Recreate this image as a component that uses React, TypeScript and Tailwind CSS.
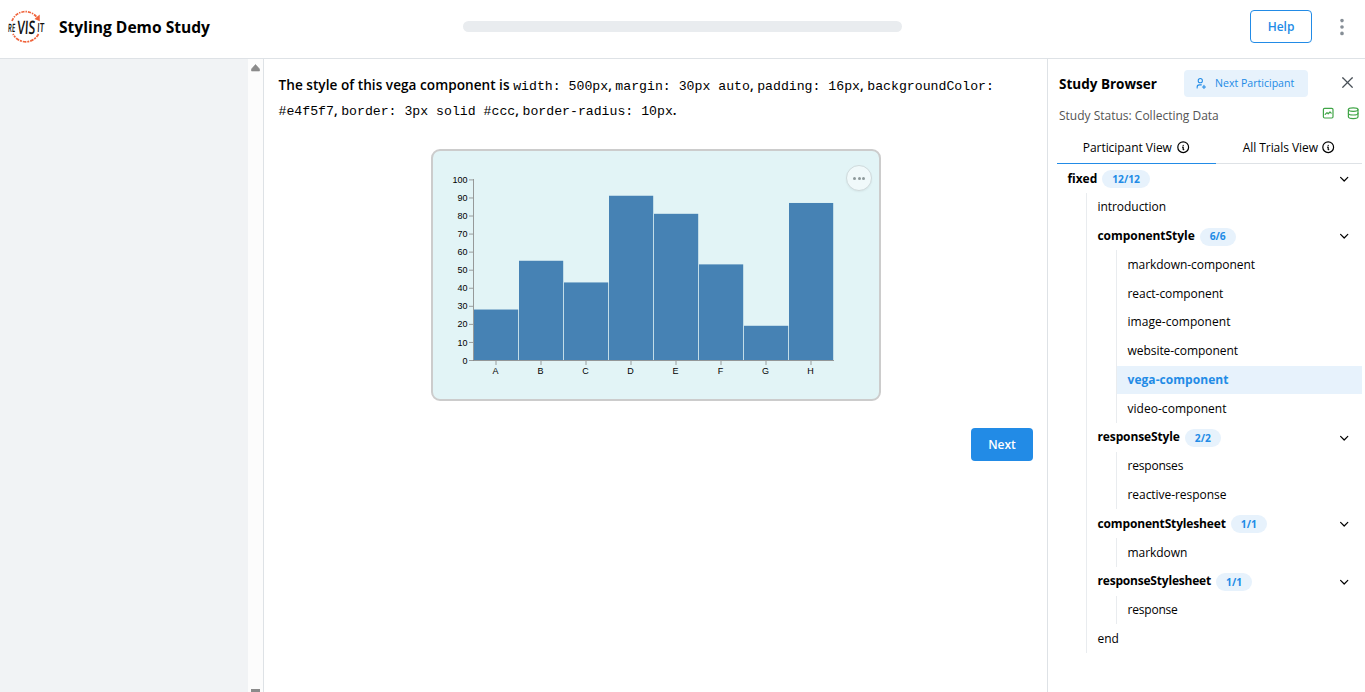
import { ReactNode } from "react";
import { TbChevronDown, TbDatabase, TbDotsVertical, TbGraph, TbInfoCircle, TbUserPlus, TbX } from "react-icons/tb";

type Node = { name: string; count?: string; tracking?: string; active?: boolean; children?: Node[] };

const sequence: Node = {
  name: "fixed",
  count: "12/12",
  children: [
    { name: "introduction" },
    {
      name: "componentStyle",
      count: "6/6",
      tracking: "tracking-[-0.05px]",
      children: [
        { name: "markdown-component" },
        { name: "react-component" },
        { name: "image-component", tracking: "tracking-[0.05px]" },
        { name: "website-component" },
        { name: "vega-component", active: true, tracking: "tracking-[0.05px]" },
        { name: "video-component", tracking: "tracking-[0.03px]" },
      ],
    },
    {
      name: "responseStyle",
      count: "2/2",
      tracking: "tracking-[-0.12px]",
      children: [{ name: "responses", tracking: "tracking-[-0.2px]" }, { name: "reactive-response" }],
    },
    { name: "componentStylesheet", count: "1/1", tracking: "tracking-[-0.15px]", children: [{ name: "markdown" }] },
    {
      name: "responseStylesheet",
      count: "1/1",
      tracking: "tracking-[-0.2px]",
      children: [{ name: "response", tracking: "tracking-[-0.2px]" }],
    },
    { name: "end" },
  ],
};

function TreeNode({ node }: { node: Node }) {
  return (
    <div>
      <div className={`flex h-[28.78px] items-center pl-[10.5px] pr-[11px] ${node.active ? "bg-[#e7f2fc]" : ""}`}>
        <span
          className={`${node.tracking ?? "tracking-[-0.05px]"} ${
            node.active ? "font-bold text-[#228be6]" : node.count ? "font-bold" : ""
          }`}
        >
          {node.name}
        </span>
        {node.count && (
          <>
            <span className="ml-[5px] mt-px flex h-[18px] items-center rounded-full bg-[#e7f2fc] px-[10px] pt-px text-[10.3px] font-bold text-[#228be6]">
              {node.count}
            </span>
            <TbChevronDown className="ml-auto mt-px size-[14.4px]" />
          </>
        )}
      </div>
      {node.children && (
        <div className="ml-[29px] border-l border-[#e9ecef]">
          {node.children.map((c) => (
            <TreeNode key={c.name} node={c} />
          ))}
        </div>
      )}
    </div>
  );
}

function Logo() {
  return (
    <svg className="size-9 shrink-0 overflow-visible" viewBox="0 0 36 36">
      <g fill="none" stroke="#f0643c" strokeWidth="1.7">
        <path d="M4 12A14.3 14.3 0 0 1 29 8.5" strokeDasharray="3.2 1 1.4 1" />
        <path d="M30.500 25A14.300 14.300 0 0 1 5 25" strokeDasharray="3.6 1 2 0.9" />
      </g>
      <path d="M26.500 10L31.700 5.500L31.800 12.300Z" fill="#f0643c" />
      <g fontFamily="Open Sans, sans-serif" fill="#111" fontWeight="600" transform="skewX(-3)">
        <text x="1" y="23.500" fontSize="11.500" textLength="7.300" lengthAdjust="spacingAndGlyphs">
          RE
        </text>
        <text x="10.300" y="25" fontSize="18.500" textLength="18" lengthAdjust="spacingAndGlyphs">
          VIS
        </text>
        <text x="30.300" y="23" fontSize="12.500" textLength="7" lengthAdjust="spacingAndGlyphs">
          IT
        </text>
      </g>
    </svg>
  );
}

const bars: [string, number][] = [
  ["A", 28],
  ["B", 55],
  ["C", 43],
  ["D", 91],
  ["E", 81],
  ["F", 53],
  ["G", 19],
  ["H", 87],
];

function BarChart() {
  const base = 209.1;
  const unit = 1.806;
  return (
    <svg className="block" width="446" height="248" fontFamily="Liberation Sans, Arial, sans-serif" fontSize="9">
      {bars.map(([label, value], i) => (
        <rect key={label} x={41 + i * 45} y={base - value * unit} width="44.200" height={value * unit} fill="#4682b4" />
      ))}
      <path d="M40.500 28V210M40 209.500H401" stroke="#888" strokeOpacity="0.85" fill="none" />
      {Array.from({ length: 11 }, (_, i) => (
        <g key={i}>
          <path d={`M36 ${209.5 - i * 18.06}H40`} stroke="#888" strokeOpacity="0.8" />
          <text x="34.500" y={212.6 - i * 18.06} textAnchor="end">
            {i * 10}
          </text>
        </g>
      ))}
      {bars.map(([label], i) => (
        <g key={label}>
          <path d={`M${63 + i * 45} 210V214`} stroke="#888" strokeOpacity="0.8" />
          <text x={62.5 + i * 45} y="223" textAnchor="middle">
            {label}
          </text>
        </g>
      ))}
    </svg>
  );
}

function Code({ children }: { children: ReactNode }) {
  return (
    <code className="font-['Liberation_Mono',monospace] text-[13.2px] font-normal leading-none">{children}</code>
  );
}

export default function App() {
  return (
    <div className="flex h-[692px] w-[1365px] flex-col overflow-hidden bg-white font-['Open_Sans',sans-serif] text-[12px] text-black">
      <header className="flex h-[59px] shrink-0 items-center border-b border-[#dee2e6] pb-[5px] pl-2 pr-3">
        <Logo />
        <h1 className="ml-[15px] mt-[3px] w-[404px] text-[15.6px] font-bold">Styling Demo Study</h1>
        <div className="h-[11px] w-[439px] rounded-full bg-[#e9ecef]" />
        <button className="ml-auto h-[33px] w-[62px] rounded-[4px] border border-[#228be6] font-semibold text-[#228be6]">
          Help
        </button>
        <TbDotsVertical className="ml-[19px] size-[22px] text-[#868e96]" />
      </header>

      <div className="flex min-h-0 flex-1">
        <aside className="flex w-[264px] shrink-0 border-r border-[#dee2e6] bg-[#f1f3f5]">
          <div className="ml-auto flex w-[15px] flex-col items-center justify-between bg-[#fcfcfc] pt-[5px]">
            <svg width="9" height="8" viewBox="0 0 9 8">
              <path
                d="M4.500 0.500L8.500 5V7H0.500V5Z"
                fill="#8b8b8b"
                stroke="#8b8b8b"
                strokeLinejoin="round"
                strokeWidth="0.600"
              />
            </svg>
            <div className="h-[3px] w-[9px] bg-[#8b8b8b]" />
          </div>
        </aside>

        <main className="flex w-[783px] shrink-0 flex-col pl-[14.5px] pr-[14px] pt-[13px]">
          <p className="h-[50px] whitespace-nowrap text-[13.6px] font-semibold leading-[25px]">
            <span className="tracking-[0.03px]">The style of this vega component is </span>
            <Code>width: 500px</Code>, <Code>margin: 30px auto</Code>, <Code>padding: 16px</Code>,{" "}
            <Code>backgroundColor:</Code>
            <br />
            <Code>#e4f5f7</Code>, <Code>border: 3px solid #ccc</Code>, <Code>border-radius: 10px</Code>.
          </p>
          <div className="relative ml-[152.5px] mt-[27px] h-[252px] w-[450px] rounded-[9px] border-2 border-[#ccc] bg-[#e2f4f6]">
            <BarChart />
            <button className="absolute right-[7px] top-[14px] flex size-[26px] items-center justify-center gap-[1.5px] rounded-full border border-[#cfdadc] bg-[#f0f9fa] shadow-xs">
              <span className="size-[3px] rounded-full bg-[#8e9a9c]" />
              <span className="size-[3px] rounded-full bg-[#8e9a9c]" />
              <span className="size-[3px] rounded-full bg-[#8e9a9c]" />
            </button>
          </div>
          <button className="ml-auto mt-[27px] h-[33px] w-[62px] rounded-[4px] bg-[#228be6] font-semibold text-white">
            Next
          </button>
        </main>

        <aside className="flex-1 border-l border-[#dee2e6]">
          <div className="mt-[11px] flex h-[27px] items-center pl-[11px] pr-[8px]">
            <h2 className="mt-[1px] w-[125px] text-[13.5px] font-bold">Study Browser</h2>
            <button className="flex h-[27px] w-[124px] items-center rounded-[4px] bg-[#e7f2fc] pl-[9.5px] text-[10.55px] font-medium text-[#228be6]">
              <TbUserPlus className="mr-[9px] size-[12.6px]" />
              Next Participant
            </button>
            <TbX className="-mt-[2px] ml-auto size-[19px] text-[#495057]" strokeWidth={1.5} />
          </div>
          <div className="mt-[7px] flex h-5 items-center pl-[11px] pr-[5px]">
            <span className="mt-1 text-[#545454]">Study Status: Collecting Data</span>
            <TbGraph className="-mt-[2px] ml-auto size-[14.4px] text-[#40a547]" />
            <TbDatabase className="-mt-[2px] ml-[10.5px] size-[14.4px] text-[#40a547]" />
          </div>
          <div className="ml-[9px] mr-[3px] mt-2 flex h-[32px]">
            <div className="flex w-[159px] items-center justify-center gap-1 border-b border-[#228be6]">
              <span className="tracking-[-0.05px]">Participant View</span>
              <TbInfoCircle className="size-[14.4px]" />
            </div>
            <div className="flex flex-1 items-center justify-center gap-[3px] border-b border-[#dee2e6]">
              <span className="tracking-[-0.06px]">All Trials View</span>
              <TbInfoCircle className="size-[14.4px]" />
            </div>
          </div>
          <div className="ml-[9px] mr-[3px] mt-[0.2px]">
            <TreeNode node={sequence} />
          </div>
        </aside>
      </div>
    </div>
  );
}
